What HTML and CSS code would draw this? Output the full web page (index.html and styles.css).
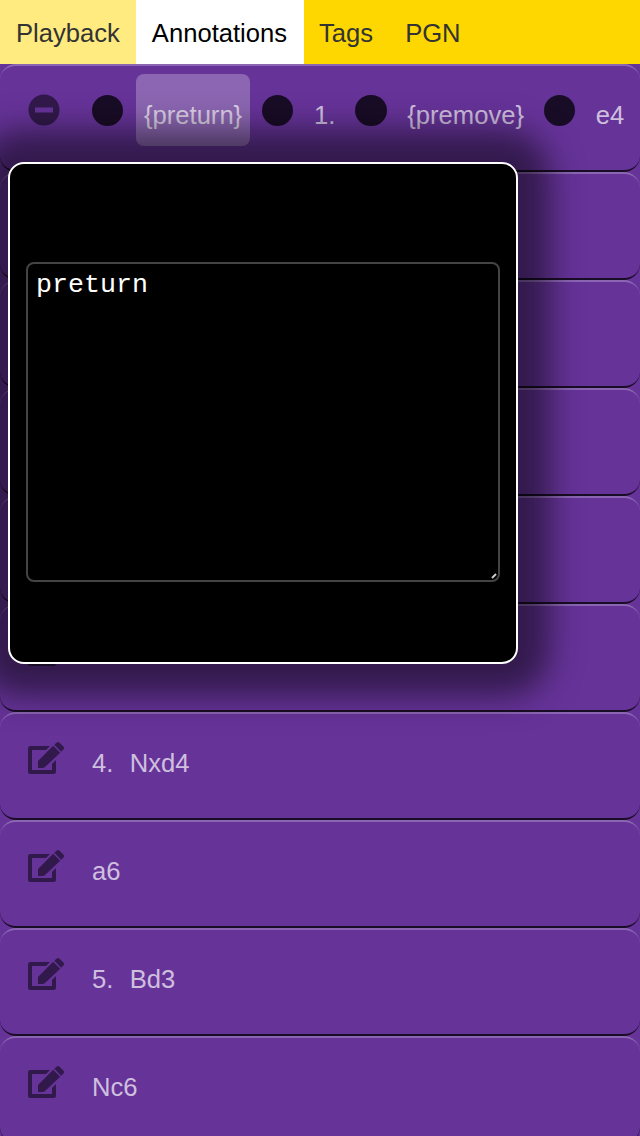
FILE: index.html
```
<!DOCTYPE html>
<html lang="en">
<head>
<meta charset="utf-8">
<title>Annotations</title>
<link rel="stylesheet" href="styles.css">
</head>
<body>
<svg class="defs" width="0" height="0">
  <symbol id="edit" viewBox="0 0 36 32"><path d="M22 4H2.500A2.500 2.500 0 0 0 0 6.500v23A2.500 2.500 0 0 0 2.500 32h23a2.500 2.500 0 0 0 2.500-2.500V18l-4 4v6H4V8h14z"/><path d="M10 26v-7L25.200 3.800l7 7L17 25q-1 1-2.500 1z"/><path d="M26.300 2.800 28.500.7q1.500-1.300 3 0l3.900 3.900q1.200 1.500 0 2.900L33.200 9.700z"/></symbol>
</svg>
<nav class="tabs">
  <a class="tab hover">Playback</a>
  <a class="tab active">Annotations</a>
  <a class="tab">Tags</a>
  <a class="tab">PGN</a>
</nav>
<main class="moves">
  <div class="row first">
    <svg class="minus" viewBox="0 0 32 32"><path fill-rule="evenodd" d="M16 .5a15.500 15.500 0 1 0 0 31 15.500 15.500 0 0 0 0-31zM7 13.500h18v5H7z"/></svg>
    <i class="dot"></i><span class="token selected">{preturn}</span>
    <i class="dot"></i><span class="token">1.</span>
    <i class="dot"></i><span class="token">{premove}</span>
    <i class="dot"></i><span class="token">e4</span>
  </div>
  <div class="row"></div>
  <div class="row"></div>
  <div class="row"></div>
  <div class="row"></div>
  <div class="row"><svg class="edit"><use href="#edit"/></svg><span>cxd4</span></div>
  <div class="row"><svg class="edit"><use href="#edit"/></svg><span class="number">4.</span><span>Nxd4</span></div>
  <div class="row"><svg class="edit"><use href="#edit"/></svg><span>a6</span></div>
  <div class="row"><svg class="edit"><use href="#edit"/></svg><span class="number">5.</span><span>Bd3</span></div>
  <div class="row"><svg class="edit"><use href="#edit"/></svg><span>Nc6</span></div>
</main>
<div class="dialog">
  <div class="editor">preturn<svg class="grip" viewBox="0 0 6 6"><path d="M1 5 5 1"/></svg></div>
</div>
</body>
</html>
```
FILE: styles.css
```
* { box-sizing: border-box; }
body {
  margin: 0;
  height: 1136px;
  overflow: hidden;
  position: relative;
  background: #639;
  font: 25.6px/32px "Liberation Sans", Arial, sans-serif;
}
.defs { position: absolute; }
.tabs { display: flex; height: 64px; background: gold; position: relative; z-index: 2; }
.tab { padding: 17px 16px 0; color: #333; }
.hover { background: #ffeb80; }
.active { width: 168px; margin-right: -.8px; background: #fff; color: #000; }
.row {
  display: flex;
  height: 108px;
  padding: 0 0 0 28px;
  border-top: 2px solid rgba(255, 255, 255, .25);
  border-bottom: 2px solid rgba(0, 0, 0, .75);
  border-radius: 16px;
  color: rgba(255, 255, 255, .7);
}
.row span { padding-top: 33px; white-space: nowrap; }
.edit { width: 36px; height: 32px; margin: 28px 28px 0 0; fill: #000; opacity: .5; }
.row .number { margin-right: 16.300px; }
.minus { width: 32px; height: 32px; margin: 28px 32px 0 0; opacity: .5; flex: none; }
.dot {
  width: 31.200px;
  height: 31.200px;
  margin: 28.900px 12.800px 0 0;
  border-radius: 50%;
  background: rgba(0, 0, 0, .75);
  flex: none;
}
.row .token {
  height: 72px;
  margin: 8px 11.900px 0 0;
  padding: 25px 8px 0;
  border-radius: 8px;
}
.selected { background: rgba(255, 255, 255, .25); }
.dialog {
  position: absolute;
  left: 8px;
  top: 162px;
  width: 510px;
  height: 502px;
  display: flex;
  align-items: center;
  justify-content: center;
  background: #000;
  border: 2px solid #fff;
  border-radius: 16px;
  box-shadow: 0 0 32px 32px rgba(0, 0, 0, .5);
}
.editor {
  position: relative;
  width: 474px;
  height: 320px;
  margin-top: 18px;
  padding: 6px 8px;
  border: 2px solid #444;
  border-radius: 8px;
  color: #fff;
  font: 26.667px/30px "Liberation Mono", monospace;
}
.grip { position: absolute; right: 1px; bottom: 1px; width: 6px; height: 6px; stroke: #ccc; stroke-width: 2; }
```
